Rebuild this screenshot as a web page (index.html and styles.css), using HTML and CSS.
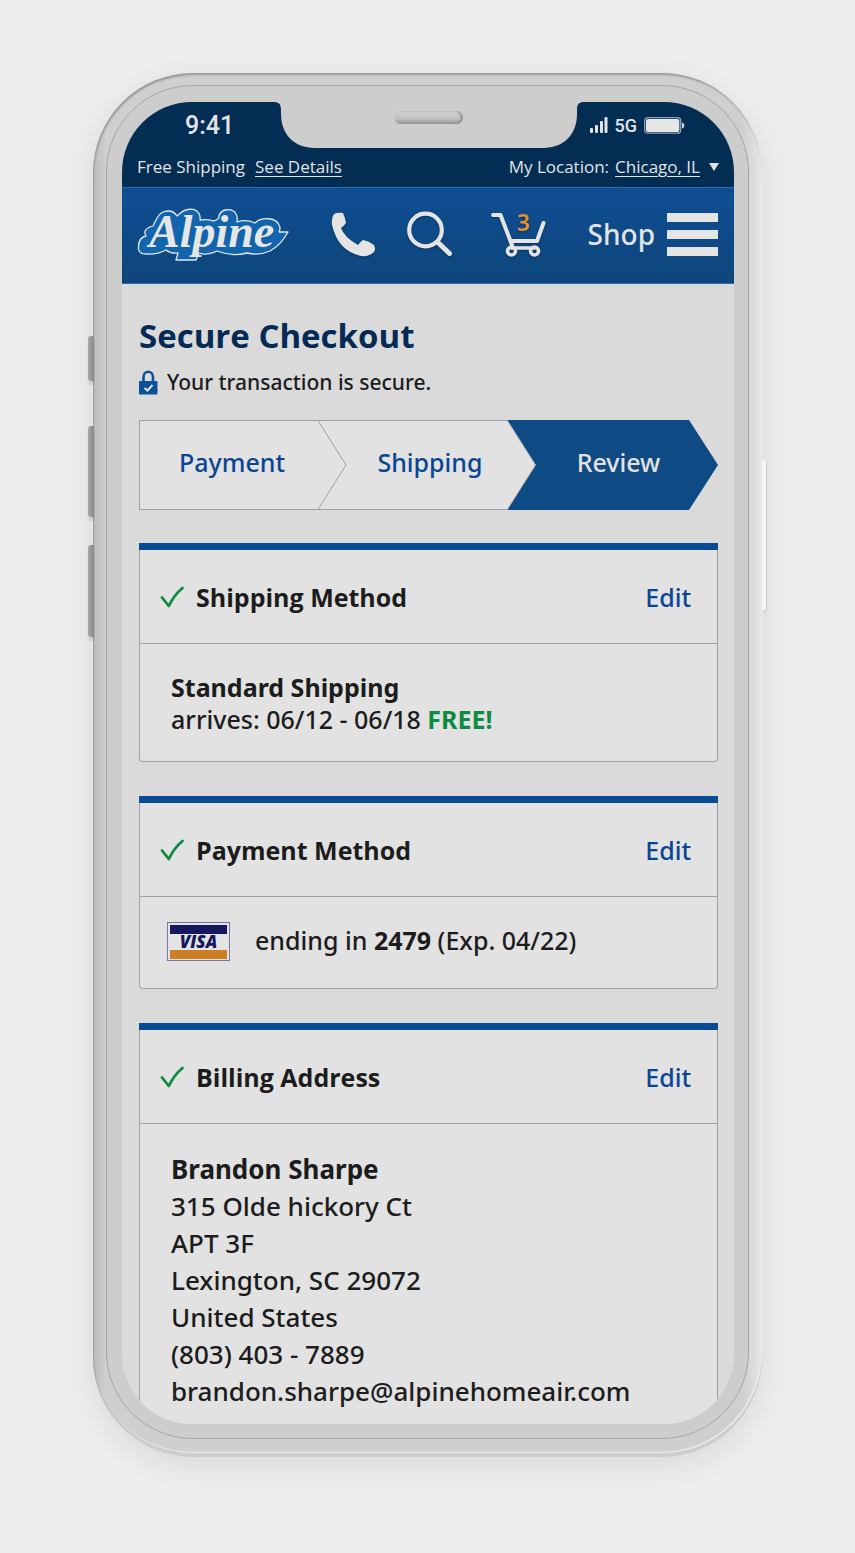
FILE: index.html
```html
<!DOCTYPE html>
<html lang="en">
<head>
<meta charset="utf-8">
<meta name="viewport" content="width=device-width, initial-scale=1">
<title>Alpine – Secure Checkout</title>
<link rel="stylesheet" href="styles.css">
</head>
<body>
<div class="phone">
  <span class="side-key key-mute"></span>
  <span class="side-key key-up"></span>
  <span class="side-key key-down"></span>
  <span class="side-key key-power"></span>
  <div class="bezel">
    <div class="screen">
      <div class="topbar">
        <div class="status">
          <span class="time">9:41</span>
          <span class="notch">
            <svg width="311" height="46" viewBox="0 0 311 46" aria-hidden="true"><path d="M0 0C6 0 8 2 8 8V12C8 32 21 46 42 46H270C291 46 304 32 304 12V8C304 2 306 0 311 0Z" fill="#cdcdcd"/></svg>
            <span class="speaker"></span>
          </span>
          <span class="signals">
            <svg width="18" height="16" viewBox="0 0 18 16" fill="#e2e4e6" aria-hidden="true"><rect x="0" y="11" width="3" height="5" rx="1"/><rect x="5" y="8" width="3" height="8" rx="1"/><rect x="10" y="4" width="3" height="12" rx="1"/><rect x="14.500" y="0" width="3" height="16" rx="1"/></svg>
            <span class="network">5G</span>
            <svg width="41" height="17" viewBox="0 0 41 17" aria-hidden="true"><rect x=".7" y=".7" width="36" height="15.500" rx="3" fill="none" stroke="#8fa3b5" stroke-width="1.300"/><rect x="2" y="2" width="33.400" height="13" rx="2" fill="#e6e6e6"/><path d="M38 5.500c3 .5 3 5.500 0 6z" fill="#d6dade"/></svg>
          </span>
        </div>
        <div class="promo">
          <p>Free Shipping <a href="#details">See Details</a></p>
          <p>My Location: <a href="#location">Chicago, IL</a><svg class="caret" width="10" height="8" viewBox="0 0 10 8" aria-hidden="true"><path d="M0 0h10L5 8z" fill="#e2e2e2"/></svg></p>
        </div>
      </div>
      <header class="header">
        <a class="logo" href="#home" aria-label="Alpine home">
          <svg width="152" height="54" viewBox="0 0 152 54">
            <path d="M1.500 41C1 33 4 29 9 28C6 23 9 20 16 18C19 12 21 6 26 4C32 2 37 3 40 8C44 5 45 2 51 1.500C58 0 64 4 63 12Q71 11 76 13C81 12 82 10 82 8C84 0 96 0 99 6Q101 9 100 14Q109 11 118 15C124 9 139 9 142 17Q144 20 142 24L151 24Q144 37 133 43Q122 48 110 45Q95 49 80 43Q69 48 62 45L59 52H39L41 45Q34 46 29 42Q20 47 9 46Q2 46 1.500 41Z" fill="#1265ad" stroke="#e4e7ea" stroke-width="1.300" stroke-linejoin="round"/>
            <text class="logo-text" x="12" y="39">Alpine</text>
          </svg>
        </a>
        <a class="icon-link icon-phone" href="tel:" aria-label="Call us">
          <svg width="45" height="45" viewBox="0 0 45 45"><path d="M3 2Q7 0 12 1Q14 5 15 11Q13 14 10 16Q13 25 27 33Q29 30 32 28Q38 29 43 33Q45 37 43 40Q38 45 30 44Q7 39 1 13Q0 6 3 2Z" fill="#e4e4e4"/></svg>
        </a>
        <a class="icon-link" href="#search" aria-label="Search">
          <svg width="48" height="48" viewBox="0 0 48 48" fill="none" stroke="#e4e4e4"><circle cx="19.500" cy="19" r="16.300" stroke-width="4.200"/><path d="M32 31.500L43.500 42.500" stroke-width="5" stroke-linecap="round"/></svg>
        </a>
        <a class="icon-link" href="#cart" aria-label="Cart, 3 items">
          <svg width="56" height="48" viewBox="0 0 56 48" fill="none" stroke="#e4e4e4" stroke-width="4" stroke-linecap="round" stroke-linejoin="round"><path d="M3 4H10.500L22 34M22 30H47L53.500 12" /><path d="M21 37H45" stroke-width="3.500"/><circle cx="21.500" cy="40" r="4" stroke-width="3.600"/><circle cx="44.500" cy="40" r="4" stroke-width="3.600"/><text class="cart-count" x="27" y="20">3</text></svg>
        </a>
        <button class="shop" type="button"><span>Shop</span>
          <svg width="51" height="44" viewBox="0 0 51 44" fill="#e4e4e4" aria-hidden="true"><path d="M0 0h51v9H0zM0 17h51v9H0zM0 34h51v9H0z"/></svg>
        </button>
      </header>
      <main class="content">
        <h1>Secure Checkout</h1>
        <p class="secure"><svg width="19" height="25" viewBox="0 0 19 25" aria-hidden="true"><path d="M4.500 12V7C4.500 0 14 0 14 7V12" fill="none" stroke="#0b509a" stroke-width="2.600"/><rect x="0" y="11" width="18.500" height="13.500" rx="1" fill="#0b509a"/><path d="M5.500 18L8.500 20.500L13.500 15" fill="none" stroke="#e2e2e2" stroke-width="2"/></svg>Your transaction is secure.</p>
        <ol class="steps">
          <li class="step step-payment"><a href="#payment">Payment</a></li>
          <li class="step-edge" aria-hidden="true"><svg width="29" height="90" viewBox="0 0 29 90"><path d="M0 0H29V90H0Z" fill="#e2e2e2"/><path d="M0 .5H29M0 89.500H29M0 .5L28 45L0 89.500" fill="none" stroke="#9f9f9f"/></svg></li>
          <li class="step step-shipping"><a href="#shipping">Shipping</a></li>
          <li class="step-edge" aria-hidden="true"><svg width="29" height="90" viewBox="0 0 29 90"><path d="M0 0L28.500 45L0 90Z" fill="#e2e2e2"/><path d="M0 0H29V90H0L28.500 45Z" fill="#0e4a84"/><path d="M0 0L28.500 45L0 90" fill="none" stroke="#b1b5b9"/></svg></li>
          <li class="step step-review" aria-current="step">Review</li>
          <li class="step-edge" aria-hidden="true"><svg width="29" height="90" viewBox="0 0 29 90"><path d="M0 0L29 45L0 90Z" fill="#0e4a84"/></svg></li>
        </ol>

        <section class="card">
          <div class="card-head">
            <svg class="tick" width="25" height="23" viewBox="0 0 25 23" aria-hidden="true"><path d="M2 12.500L8.800 21Q14 10 22.500 3" fill="none" stroke="#0e8a43" stroke-width="2.800" stroke-linecap="round" stroke-linejoin="round"/></svg>
            <h2>Shipping Method</h2><a href="#edit-shipping">Edit</a>
          </div>
          <div class="card-body">
            <p><strong>Standard Shipping</strong></p>
            <p>arrives: 06/12 - 06/18 <strong class="free">FREE!</strong></p>
          </div>
        </section>

        <section class="card">
          <div class="card-head">
            <svg class="tick" width="25" height="23" viewBox="0 0 25 23" aria-hidden="true"><path d="M2 12.500L8.800 21Q14 10 22.500 3" fill="none" stroke="#0e8a43" stroke-width="2.800" stroke-linecap="round" stroke-linejoin="round"/></svg>
            <h2>Payment Method</h2><a href="#edit-payment">Edit</a>
          </div>
          <div class="card-body card-pay">
            <svg width="63" height="40" viewBox="0 0 63 40"><rect x=".5" y=".5" width="62" height="38" fill="#e4e4e4" stroke="#77779f"/><rect x="3" y="3" width="57" height="9" fill="#15175f"/><rect x="3" y="28" width="57" height="9" fill="#ce7e22"/><text class="visa" x="31.500" y="26" text-anchor="middle">VISA</text></svg>
            <p>ending in <strong>2479</strong> (Exp. 04/22)</p>
          </div>
        </section>

        <section class="card card-last">
          <div class="card-head">
            <svg class="tick" width="25" height="23" viewBox="0 0 25 23" aria-hidden="true"><path d="M2 12.500L8.800 21Q14 10 22.500 3" fill="none" stroke="#0e8a43" stroke-width="2.800" stroke-linecap="round" stroke-linejoin="round"/></svg>
            <h2>Billing Address</h2><a href="#edit-billing">Edit</a>
          </div>
          <address class="card-body card-address">
            <strong>Brandon Sharpe</strong><br>
            315 Olde hickory Ct<br>
            APT 3F<br>
            Lexington, SC 29072<br>
            United States<br>
            (803) 403 - 7889<br>
            brandon.sharpe@alpinehomeair.com
          </address>
        </section>
      </main>
    </div>
  </div>
</div>
</body>
</html>
```

FILE: styles.css
```css
* { box-sizing: border-box; }

body {
  margin: 0;
  padding: 73px 93px 97px;
  background: #eeeeee;
  color: #1c1c1c;
  font-family: "Noto Sans", "Open Sans", sans-serif;
  font-size: 25px;
  font-weight: 500;
}

h1, h2, p, ol { margin: 0; padding: 0; }
a { color: #0a4594; text-decoration: none; }
strong { font-weight: 700; }
svg { display: block; flex: none; overflow: visible; }

/* Device shell */
.phone {
  position: relative;
  max-width: 760px;
  margin: 0 auto;
  padding: 12px 13px 18px;
  border-radius: 100px;
  background: linear-gradient(90deg, #bdbdbd, #cfcfcf 2%, #cfcfcf 97%, #e6e6e6);
  box-shadow:
    inset 1px 2px 2px #999999,
    inset 0 -4px 0 #cdcdcd,
    inset -1px -5px 1px #f0f0f0,
    0 8px 36px rgba(0, 0, 0, 0.09);
}

.bezel {
  padding: 16px 14px 14px 15px;
  border: 1px solid #a6a6a6;
  border-radius: 87px;
  background: #cdcdcd;
}

.side-key {
  position: absolute;
  left: -5px;
  width: 6px;
  border-radius: 3px 0 0 3px;
  background: linear-gradient(90deg, #aaaaaa, #868686);
  box-shadow: 0 4px 2px rgba(0, 0, 0, 0.1);
}
.key-mute { top: 263px; height: 45px; }
.key-up { top: 353px; height: 91px; }
.key-down { top: 472px; height: 92px; }
.key-power {
  top: 387px;
  right: -4px;
  left: auto;
  width: 4px;
  height: 151px;
  border-radius: 0 3px 3px 0;
  background: #f6f6f6;
  box-shadow: 1px 1px 1px #c8c8c8;
}

.screen {
  overflow: hidden;
  border-radius: 70px;
  background: #dadada;
}

/* Status and promo bar */
.topbar {
  height: 85px;
  background: #032d52;
  color: #e2e4e6;
}
.status {
  display: grid;
  grid-template-columns: 1fr auto 1fr;
  height: 46px;
  font-family: Roboto, sans-serif;
}
.time {
  align-self: center;
  padding-left: 63px;
  font-size: 25px;
}
.notch { position: relative; }
.speaker {
  position: absolute;
  top: 9px;
  left: 121px;
  width: 69px;
  height: 13px;
  border-radius: 7px;
  background: linear-gradient(#d2d2d2, #c2c2c2 60%, #909090);
  box-shadow: inset -2px 0 2px #909090;
}
.signals {
  display: flex;
  align-items: center;
  gap: 7px;
  padding-left: 6px;
}
.network { font-size: 18px; }
.promo {
  display: flex;
  justify-content: space-between;
  padding: 7px 15px 0;
  font-family: "Open Sans", sans-serif;
  font-size: 17px;
  font-weight: 400;
  line-height: 24px;
}
.promo p { display: flex; align-items: center; gap: 6px; }
.promo a {
  color: inherit;
  text-decoration: underline;
  text-underline-offset: 3px;
}
.promo p:first-child { gap: 10px; }
.caret { margin-left: 3px; }

/* Site header */
.header {
  display: flex;
  align-items: center;
  gap: 36px;
  height: 97px;
  padding: 0 16px 2px 15px;
  border-top: 1px solid #2c6cab;
  border-bottom: 1px solid #2c6cab;
  background: linear-gradient(#0f4e93, #0e467c);
}
.logo { margin-right: 6px; }
.logo-text {
  fill: #e6e6e6;
  font: italic 700 46px "Liberation Serif", serif;
}
.icon-phone { margin-right: -6px; }
.icon-link svg { filter: drop-shadow(0 1px 1px rgba(0, 0, 0, 0.3)); }
.cart-count {
  fill: #e88f25;
  stroke: none;
  font: 600 23px "Noto Sans", sans-serif;
}
.shop {
  display: flex;
  align-items: center;
  gap: 12px;
  margin-left: auto;
  padding: 0;
  border: 0;
  background: none;
  color: #e4e4e4;
  font: 500 28px "Noto Sans", sans-serif;
}
.shop span { padding-bottom: 2px; }

/* Checkout */
.content { padding: 28px 16px 0 17px; }
h1 {
  color: #042a55;
  font-family: "Open Sans", sans-serif;
  font-size: 33px;
  font-weight: 700;
  line-height: 48px;
}
.secure {
  display: flex;
  align-items: center;
  gap: 9px;
  font-size: 21px;
  line-height: 30px;
  padding: 7px 0 23px;
}
.steps {
  display: flex;
  margin-bottom: 33px;
  list-style: none;
}
.step {
  display: flex;
  align-items: center;
  justify-content: center;
  height: 90px;
  padding: 0 0 6px 6px;
  border: 1px solid #9f9f9f;
  border-width: 1px 0;
  background: #e2e2e2;
}
.step-payment { flex: 1 1 179px; border-left-width: 1px; }
.step-shipping { flex: 1 1 160px; }
.step-review {
  flex: 1 1 153px;
  padding-left: 12px;
  border: 0;
  background: #0e4a84;
  color: #e2e2e2;
}

.card {
  margin-bottom: 34px;
  border: 1px solid #a2a2a2;
  border-top: 0;
  border-radius: 0 0 4px 4px;
  background: #e2e2e2;
}
.card::before {
  display: block;
  height: 7px;
  margin: 0 -1px;
  background: #074d95;
  content: "";
}
.card-head {
  display: flex;
  align-items: center;
  height: 94px;
  padding: 0 26px 0 20px;
  border-bottom: 1px solid #a2a2a2;
}
h2 {
  flex: 1;
  margin-left: 11px;
  font-family: "Open Sans", sans-serif;
  font-size: 25px;
  font-weight: 700;
}
.card-body { padding: 27px 31px 26px; line-height: 32px; }
.free { color: #0e8a43; }
.card-pay {
  display: flex;
  align-items: center;
  gap: 25px;
  padding: 25px 27px 26px;
}
.card-pay p { padding-bottom: 4px; }
.visa {
  fill: #15175f;
  font: italic 800 17px "Open Sans", sans-serif;
}
.card-last {
  margin-bottom: 0;
  border-bottom: 0;
}
.card-address {
  padding: 27px 31px 14px;
  font-size: 26px;
  font-style: normal;
  line-height: 37px;
}
```
